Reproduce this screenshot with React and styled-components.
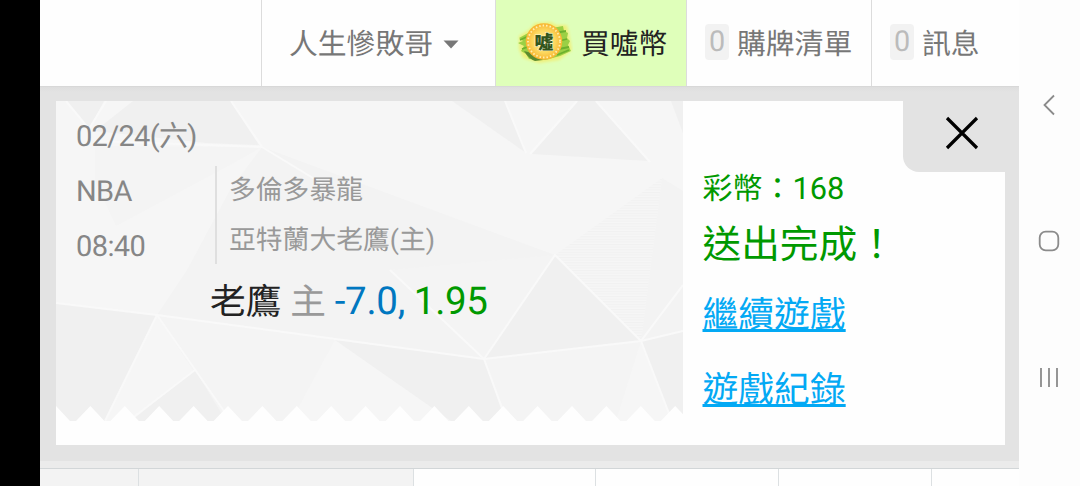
import React from 'react'
import styled, { createGlobalStyle } from 'styled-components';

const teeth = Array.from({ length: 19 }, (_, i) => `L${i * 34.4 + 14} 320 L${i * 34.4 + 20} 320 L${(i + 1) * 34.4} 305`).join(' ');

const TicketPaper = () => (
  <Paper viewBox="0 0 627 320" preserveAspectRatio="none">
    <defs>
      <pattern id="stripes" width="6" height="2.6" patternUnits="userSpaceOnUse">
        <rect width="6" height="1.1" fill="#f1f1f1" />
      </pattern>
    </defs>
    <rect width="627" height="320" fill="#f6f6f6" />
    <path d="M206 46 L499 154 L428 258 L279 239 L101 214 L131 169 L174 89Z" fill="#f3f3f3" />
    <path d="M39 45 L206 46 L174 64 L60 125 L39 80Z" fill="#f4f4f4" />
    <path d="M606 77 L627 90 V230 L585 240Z" fill="#f3f3f3" />
    <path d="M334 169 L499 154 L428 258Z M101 214 L279 239 L235 320 H170Z M428 258 L585 240 L560 320 H449Z" fill="#f4f4f4" />
    <g fill="#f0f0f0">
      <path d="M10 0 H48 L33 28Z" />
      <path d="M77 0 H175 L203 44 L150 42 L39 30Z" />
      <path d="M396 0 H449 L470 52Z" />
      <path d="M522 0 H539 L592 60 L476 53Z" />
      <path d="M615 0 H627 V32Z" />
      <path d="M0 202 L101 214 L49 320 H0Z" />
      <path d="M139 269 L170 320 H75Z" />
      <path d="M279 239 L428 258 L449 320 H395Z" />
      <path d="M499 154 L585 240 L428 258Z" />
      <path d="M585 240 L627 230 V320 H616Z" />
    </g>
    <path d="M606 77 L499 154 L585 240Z" fill="url(#stripes)" />
    <g fill="none" stroke="#f9f9f9" strokeWidth="2">
      <path d="M10 0 L33 28 L50 0 M39 40 L206 46 L175 0 M206 46 L275 88" />
      <path d="M0 202 L101 214 L428 258 L585 240 L627 230" />
      <path d="M101 214 L49 320 M101 214 L170 313 M139 269 L75 318" />
      <path d="M334 169 L428 258 L449 315 M428 258 L499 154 L585 240 L614 315 M585 240 L627 184" />
      <path d="M449 0 L470 52 M474 53 L521 0 M540 0 L594 61" />
    </g>
    <path d={`M0 305 ${teeth} V320 H0Z`} fill="#fefefe" />
  </Paper>
)

const Coin = () => (
  <CoinSvg width="58" height="46" viewBox="0 0 58 46">
    <defs>
      <radialGradient id="gold">
        <stop offset="0" stopColor="#fff0a0" />
        <stop offset=".6" stopColor="#fcd860" />
        <stop offset="1" stopColor="#f8b430" />
      </radialGradient>
      <filter id="glow" x="-20%" y="-20%" width="140%" height="140%">
        <feGaussianBlur stdDeviation="1.6" />
      </filter>
      <filter id="soft">
        <feGaussianBlur stdDeviation=".7" />
      </filter>
    </defs>
    <path d="M4 16 L14 10 L20 3 L36 2 L41 5 L52 5 L54 14 L57 30 L44 40 L24 43 L8 38 L4 29Z" fill="#eff07c" filter="url(#glow)" />
    <g filter="url(#soft)">
      <path d="M4 18 L15 12 L48 6 L49 11 L53 13 L52 18 L55 21 L53 25 L56 31 L45 36 L30 40 L14 39 L11 34 L6 31 L9 26 L3 23 L8 21Z" fill="#9bd045" />
      <path d="M5 20 L16 15 M7 29 L18 25 M40 13 L51 11 M39 30 L54 27 M40 22 L52 19 M42 35 L54 30" stroke="#6cb12e" strokeWidth="1.8" />
      <path d="M9 31 Q15 32 20 35 L28 40 L20 41 Q14 39 9 31Z" fill="#5b8a2e" />
    </g>
    <circle cx="29" cy="21.5" r="18.3" fill="url(#gold)" />
    <circle cx="29" cy="21.5" r="16" fill="none" stroke="#fff0b0" strokeWidth="1.8" strokeDasharray="1.5 2" />
    <text x="29" y="28.5" textAnchor="middle" fontSize="19" fontWeight="900" fill="#33551c" stroke="#fff9d5" strokeWidth="1" paintOrder="stroke">噓</text>
  </CoinSvg>
)

const App = () => {
  return (
    <Screen>
      <GlobalStyle />
      <Notch />
      <Page>
        <Nav>
          <NavItem $width={222} />
          <NavItem $width={234} $left={27}>
            人生慘敗哥
            <Caret width="16" height="9" viewBox="0 0 16 9"><path d="M.5.5h15L8 8.5z" fill="#777" /></Caret>
          </NavItem>
          <NavItem $width={191} $left={19} $active>
            <Coin />
            買噓幣
          </NavItem>
          <NavItem $width={185} $left={18}><Badge>0</Badge>購牌清單</NavItem>
          <NavItem $width={147} $left={18}><Badge>0</Badge>訊息</NavItem>
        </Nav>
        <Frame>
          <Dialog>
            <Ticket>
              <TicketPaper />
              <GameDate>02/24(六)</GameDate>
              <Game>
                <League>
                  <div>NBA</div>
                  <div>08:40</div>
                </League>
                <Teams>
                  <div>多倫多暴龍</div>
                  <div>亞特蘭大老鷹(主)</div>
                </Teams>
              </Game>
              <Bet>老鷹 <Host>主</Host> <Spread>-7.0,</Spread> <Odds>1.95</Odds></Bet>
            </Ticket>
            <Result>
              <Coins>彩幣：<Amount>168</Amount></Coins>
              <Done>送出完成！</Done>
              <ResultLink href="#">繼續遊戲</ResultLink>
              <ResultLink href="#">遊戲紀錄</ResultLink>
            </Result>
            <Close aria-label="close">
              <svg width="34" height="34" viewBox="0 0 34 34"><path d="M2 2 32 32M32 2 2 32" stroke="#000" strokeWidth="3.2" /></svg>
            </Close>
          </Dialog>
        </Frame>
        <Gap />
        <TableRow>
          <Cell $shade />
          <Cell $shade />
          <Cell />
          <Cell />
          <Cell />
          <Cell />
        </TableRow>
      </Page>
      <SystemBar>
        <svg width="14" height="22" viewBox="0 0 14 22"><path d="M12 1.5 2.5 11 12 20.5" /></svg>
        <svg width="22" height="22" viewBox="0 0 22 22"><rect x="1.7" y="1.7" width="18.6" height="18.6" rx="6" /></svg>
        <svg width="20" height="22" viewBox="0 0 20 22"><path d="M2 2v19M10 2v19M18 2v19" /></svg>
      </SystemBar>
    </Screen>
  )
}

const GlobalStyle = createGlobalStyle`
  * {
    box-sizing: border-box;
  }
  body {
    margin: 0;
    overflow: hidden;
    font-family: Roboto, "Noto Sans CJK TC", sans-serif;
    text-rendering: geometricPrecision;
  }
`;

const Screen = styled.div`
  width: 1080px;
  height: 486px;
  display: flex;
  overflow: hidden;
  background: #fdfdfd;
`;

const Notch = styled.div`
  width: 40px;
  background: #000;
`;

const Page = styled.div`
  width: 979px;
  display: flex;
  flex-direction: column;
`;

const Nav = styled.div`
  height: 87px;
  display: flex;
  background: #fefefe;
  border-bottom: 1px solid #d8d8d8;
`;

const NavItem = styled.div`
  width: ${props => props.$width}px;
  flex: none;
  padding-left: ${props => props.$left || 0}px;
  padding-bottom: 2px;
  display: flex;
  align-items: center;
  font-size: 28.8px;
  color: ${props => props.$active ? "#222" : "#777"};
  background: ${props => props.$active ? "#dfffba" : "transparent"};
  border-right: 1px solid #dcdcdc;
  white-space: nowrap;

  &:last-child {
    border-right: none;
  }
`;

const Caret = styled.svg`
  margin: 5px 0 0 10px;
`;

const CoinSvg = styled.svg`
  margin: 2px 8px 0 0;
`;

const Badge = styled.span`
  width: 24px;
  height: 36px;
  margin: 0 8px 0 0;
  border-radius: 4px;
  background: #f2f2f2;
  color: #bbb;
  text-align: center;
  line-height: 37px;
`;

const Frame = styled.div`
  height: 374px;
  padding: 14px 14px 16px 16px;
  background: linear-gradient(#dedede, #e3e3e3 5px);
`;

const Dialog = styled.div`
  height: 344px;
  display: flex;
  position: relative;
  background: #fefefe;
`;

const Ticket = styled.div`
  width: 627px;
  height: 320px;
  position: relative;
  isolation: isolate;
  padding: 16px 0 0 20px;
  color: #868686;
`;

const Paper = styled.svg`
  position: absolute;
  inset: 0;
  width: 627px;
  height: 320px;
  z-index: -1;
`;

const GameDate = styled.div`
  font-size: 29px;
  letter-spacing: -0.7px;
  line-height: 41px;
`;

const Game = styled.div`
  display: flex;
  margin-top: 8px;
`;

const League = styled.div`
  width: 139px;
  margin-top: -1px;
  margin-bottom: -2px;
  font-size: 29px;
  letter-spacing: -0.6px;
  line-height: 55px;
`;

const Teams = styled.div`
  height: 98px;
  padding-left: 12px;
  border-left: 2px solid #dfdfdf;
  color: #999;
  font-size: 26.8px;
  line-height: 49.5px;
`;

const Bet = styled.div`
  margin: 1px 0 0 134px;
  font-size: 35.7px;
  line-height: 56px;
  color: #222;
  white-space: nowrap;
`;

const Host = styled.span`
  color: #999;
`;

const Spread = styled.span`
  color: #0077c0;
  font-size: 38.5px;
  letter-spacing: -0.3px;
`;

const Odds = styled.span`
  color: #090;
  font-size: 38.5px;
  letter-spacing: -0.3px;
`;

const Result = styled.div`
  padding: 64px 0 0 19.5px;
  display: flex;
  flex-direction: column;
  align-items: flex-start;
  color: #090;
  white-space: nowrap;
`;

const Coins = styled.div`
  font-size: 30px;
  line-height: 47px;
`;

const Amount = styled.span`
  font-size: 30.8px;
`;

const Done = styled.div`
  font-size: 38.7px;
  line-height: 65px;
`;

const ResultLink = styled.a`
  font-size: 35.8px;
  line-height: 75px;
  color: #03a9f4;
  text-decoration: underline;
  text-decoration-thickness: 3px;
  text-underline-offset: 2px;
  text-decoration-skip-ink: none;
`;

const Close = styled.button`
  position: absolute;
  top: 0;
  right: 0;
  width: 102px;
  height: 71px;
  padding: 0 0 7px 15px;
  border: 0;
  border-bottom-left-radius: 16px;
  background: #e3e3e3;
  display: flex;
  align-items: center;
  justify-content: center;
`;

const Gap = styled.div`
  height: 7px;
  background: #ebebeb;
`;

const TableRow = styled.div`
  flex: 1;
  display: grid;
  grid-template-columns: 99px 275px 182px 183px 153px 1fr;
  border-top: 1px solid #d2d6d8;
`;

const Cell = styled.div`
  border-right: 1px solid #dce0e2;
  background: ${props => props.$shade ? "#f3f3f3" : "#fefefe"};

  &:last-child {
    border-right: none;
  }
`;

const SystemBar = styled.div`
  flex: 1;
  padding: 94px 2px 0 0;
  display: flex;
  flex-direction: column;
  align-items: center;
  gap: 114px;

  svg {
    fill: none;
    stroke: #8b8b8b;
    stroke-width: 1.8;
  }
`;

export default App
